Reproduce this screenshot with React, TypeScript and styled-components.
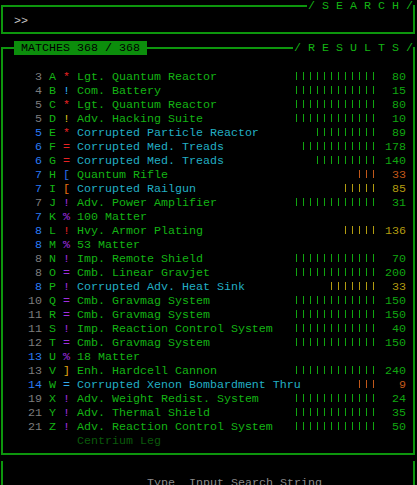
import React from 'react';
import styled, { createGlobalStyle } from 'styled-components';

const GREEN = '#14b414';
const LINE = '#0d960d';
const BAR_OK = '#10a610';
const BAR_WARN = '#b29c10';
const BAR_BAD = '#c0581a';

type Level = 'ok' | 'warn' | 'bad';
type Tone = 'green' | 'cyan' | 'dim';

interface Item {
  no?: number;
  key?: string;
  sym?: string;
  symColor?: string;
  name: string;
  tone: Tone;
  blue?: boolean;
  bars?: number;
  value?: number;
  level?: Level;
}

const RED = '#e82222';
const PURPLE = '#a02ee0';

const items: Item[] = [
  { no: 3, key: 'A', sym: '*', symColor: RED, name: 'Lgt. Quantum Reactor', tone: 'green', bars: 12, value: 80 },
  { no: 4, key: 'B', sym: '!', symColor: '#2eb4ff', name: 'Com. Battery', tone: 'green', bars: 12, value: 15 },
  { no: 5, key: 'C', sym: '*', symColor: RED, name: 'Lgt. Quantum Reactor', tone: 'green', bars: 12, value: 80 },
  { no: 5, key: 'D', sym: '!', symColor: '#dcc21c', name: 'Adv. Hacking Suite', tone: 'green', bars: 12, value: 10 },
  { no: 5, key: 'E', sym: '*', symColor: RED, name: 'Corrupted Particle Reactor', tone: 'cyan', blue: true, bars: 9, value: 89 },
  { no: 6, key: 'F', sym: '=', symColor: RED, name: 'Corrupted Med. Treads', tone: 'cyan', blue: true, bars: 11, value: 178 },
  { no: 6, key: 'G', sym: '=', symColor: RED, name: 'Corrupted Med. Treads', tone: 'cyan', blue: true, bars: 9, value: 140 },
  { no: 7, key: 'H', sym: '[', symColor: '#2a6ef2', name: 'Quantum Rifle', tone: 'green', blue: true, bars: 3, value: 33, level: 'bad' },
  { no: 7, key: 'I', sym: '[', symColor: '#e87010', name: 'Corrupted Railgun', tone: 'cyan', blue: true, bars: 5, value: 85, level: 'warn' },
  { no: 7, key: 'J', sym: '!', symColor: PURPLE, name: 'Adv. Power Amplifier', tone: 'green', bars: 12, value: 31 },
  { no: 7, key: 'K', sym: '%', symColor: PURPLE, name: '100 Matter', tone: 'green', blue: true },
  { no: 8, key: 'L', sym: '!', symColor: RED, name: 'Hvy. Armor Plating', tone: 'green', blue: true, bars: 5, value: 136, level: 'warn' },
  { no: 8, key: 'M', sym: '%', symColor: PURPLE, name: '53 Matter', tone: 'green', blue: true },
  { no: 8, key: 'N', sym: '!', symColor: PURPLE, name: 'Imp. Remote Shield', tone: 'green', bars: 12, value: 70 },
  { no: 8, key: 'O', sym: '=', symColor: PURPLE, name: 'Cmb. Linear Gravjet', tone: 'green', bars: 12, value: 200 },
  { no: 8, key: 'P', sym: '!', symColor: PURPLE, name: 'Corrupted Adv. Heat Sink', tone: 'cyan', blue: true, bars: 7, value: 33, level: 'warn' },
  { no: 10, key: 'Q', sym: '=', symColor: PURPLE, name: 'Cmb. Gravmag System', tone: 'green', bars: 12, value: 150 },
  { no: 11, key: 'R', sym: '=', symColor: PURPLE, name: 'Cmb. Gravmag System', tone: 'green', bars: 12, value: 150 },
  { no: 11, key: 'S', sym: '!', symColor: PURPLE, name: 'Imp. Reaction Control System', tone: 'green', bars: 12, value: 40 },
  { no: 12, key: 'T', sym: '=', symColor: PURPLE, name: 'Cmb. Gravmag System', tone: 'green', bars: 12, value: 150 },
  { no: 13, key: 'U', sym: '%', symColor: PURPLE, name: '18 Matter', tone: 'green', blue: true },
  { no: 13, key: 'V', sym: ']', symColor: '#e2a412', name: 'Enh. Hardcell Cannon', tone: 'green', bars: 12, value: 240 },
  { no: 14, key: 'W', sym: '=', symColor: '#34a8ea', name: 'Corrupted Xenon Bombardment Thru', tone: 'cyan', blue: true, bars: 3, value: 9, level: 'bad' },
  { no: 19, key: 'X', sym: '!', symColor: PURPLE, name: 'Adv. Weight Redist. System', tone: 'green', bars: 12, value: 24 },
  { no: 21, key: 'Y', sym: '!', symColor: PURPLE, name: 'Adv. Thermal Shield', tone: 'green', bars: 12, value: 35 },
  { no: 21, key: 'Z', sym: '!', symColor: PURPLE, name: 'Adv. Reaction Control System', tone: 'green', bars: 12, value: 50 },
  { name: 'Centrium Leg', tone: 'dim' },
];

const levelColor = (level: Level = 'ok') =>
  level === 'bad' ? BAR_BAD : level === 'warn' ? BAR_WARN : BAR_OK;

const toneColor: Record<Tone, string> = {
  green: GREEN,
  cyan: '#22afc4',
  dim: '#0b590b',
};

const App: React.FC = () => {
  return (
    <>
      <GlobalStyle />
      <Screen>
        <SearchPanel>
          <PanelTitle>/ S E A R C H /</PanelTitle>
          <Prompt>&gt;&gt;</Prompt>
        </SearchPanel>

        <ResultsPanel>
          <MatchLabel> MATCHES 368 / 368 </MatchLabel>
          <PanelTitle>/ R E S U L T S /</PanelTitle>
          {items.map((item, i) => (
            <Row key={i}>
              <Num $blue={!!item.blue}>{item.no ?? ''}</Num>
              <Key>{item.key ?? ''}</Key>
              <Sym $color={item.symColor ?? GREEN}>{item.sym ?? ''}</Sym>
              <Name $tone={item.tone}>{item.name}</Name>
              <Bars>
                {item.bars ? <BarFill $count={item.bars} $color={levelColor(item.level)} /> : null}
              </Bars>
              <Value $color={levelColor(item.level)}>{item.value ?? ''}</Value>
            </Row>
          ))}
        </ResultsPanel>

        <HintPanel>
          <Hint>Type  Input Search String</Hint>
        </HintPanel>
      </Screen>
    </>
  );
};

const GlobalStyle = createGlobalStyle`
  html, body {
    margin: 0;
    padding: 0;
    background: #000;
  }
  body {
    font-family: "Liberation Mono", "DejaVu Sans Mono", monospace;
    font-size: 11.67px;
    line-height: 14px;
    color: ${GREEN};
  }
`;

const Screen = styled.div`
  width: 417px;
  height: 485px;
  box-sizing: border-box;
  overflow: hidden;
  padding: 5px 2px 0 1px;
  display: flex;
  flex-direction: column;
  background: #000;
`;

const Panel = styled.section`
  position: relative;
  border: 2px solid ${LINE};
`;

const SearchPanel = styled(Panel)`
  padding: 7px 0 4px 11px;
`;

const ResultsPanel = styled(Panel)`
  margin-top: 13px;
  padding: 21px 7px 5px 25px;
`;

const HintPanel = styled.section`
  margin-top: 6px;
  border-left: 2px solid ${LINE};
  border-right: 2px solid ${LINE};
  padding: 15px 0 0 144px;
  flex: 1;
`;

const PanelTitle = styled.div`
  position: absolute;
  top: -8px;
  right: 0;
  padding-left: 1px;
  background: #000;
  color: ${GREEN};
  white-space: pre;
`;

const MatchLabel = styled.div`
  position: absolute;
  top: -8px;
  left: 11px;
  background: #0c8e0c;
  color: #000;
  white-space: pre;
`;

const Prompt = styled.div`
  color: #c8c8c8;
  height: 14px;
`;

const Row = styled.div`
  display: flex;
  height: 14px;
  white-space: pre;
`;

const Num = styled.span<{ $blue: boolean }>`
  flex: none;
  width: 14px;
  text-align: right;
  color: ${(p) => (p.$blue ? '#2a7cf4' : '#7c7c7c')};
`;

const Key = styled.span`
  flex: none;
  width: 7px;
  margin-left: 7px;
  color: ${GREEN};
`;

const Sym = styled.span<{ $color: string }>`
  flex: none;
  width: 7px;
  margin-left: 7px;
  color: ${(p) => p.$color};
`;

const Name = styled.span<{ $tone: Tone }>`
  flex: 1;
  min-width: 0;
  margin-left: 7px;
  overflow: visible;
  color: ${(p) => toneColor[p.$tone]};
`;

const Bars = styled.span`
  flex: none;
  width: 84px;
  display: flex;
  justify-content: flex-end;
  align-items: flex-start;
`;

const BarFill = styled.span<{ $count: number; $color: string }>`
  width: ${(p) => p.$count * 7}px;
  height: 8px;
  margin-top: 2px;
  background: repeating-linear-gradient(
    to right,
    transparent 0 2px,
    ${(p) => p.$color} 2px 3px,
    transparent 3px 7px
  );
`;

const Value = styled.span<{ $color: string }>`
  flex: none;
  width: 28px;
  text-align: right;
  color: ${(p) => p.$color};
`;

const Hint = styled.div`
  color: #8a8a8a;
  white-space: pre;
`;

export default App;
